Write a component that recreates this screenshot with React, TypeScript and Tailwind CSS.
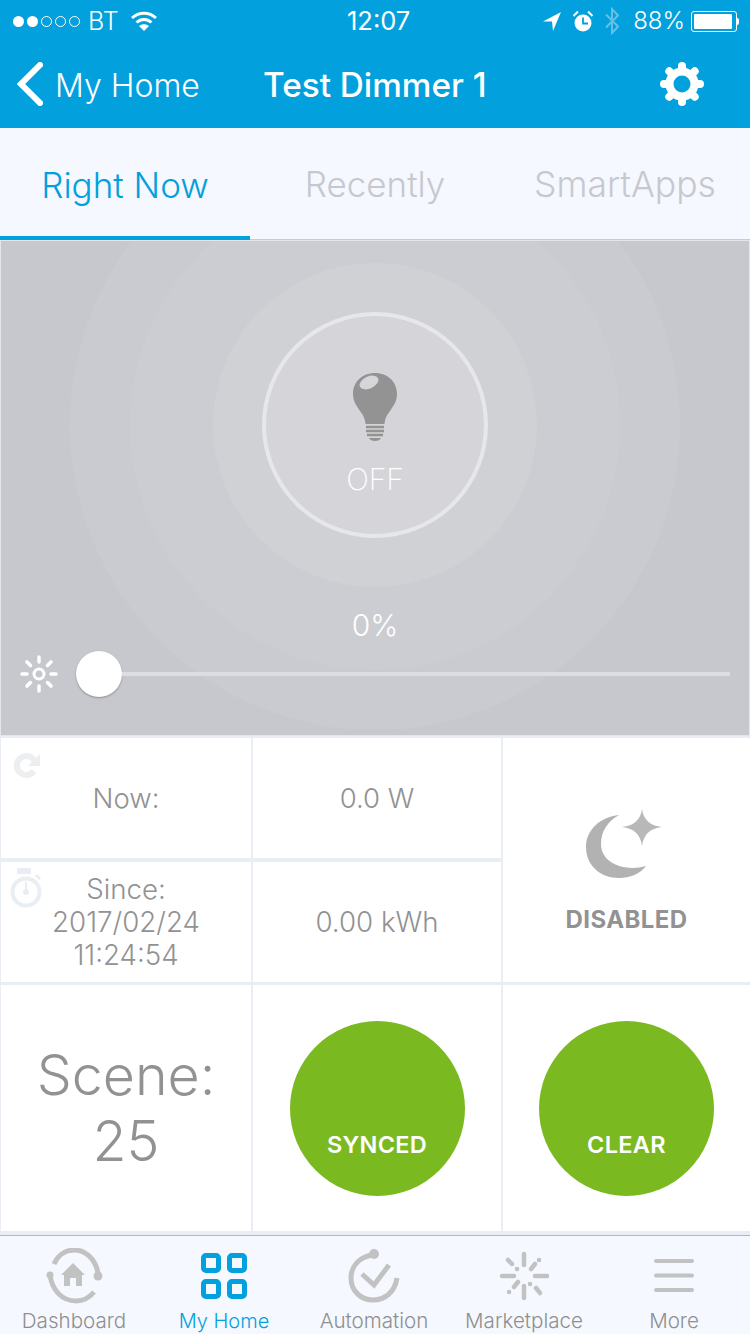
import type { ReactNode } from "react";

const FONT = "font-['Inter','Liberation_Sans',sans-serif]";

const GearIcon = () => (
  <svg width="44" height="44" viewBox="0 0 44 44" fill="none" stroke="#fff">
    <circle cx="22" cy="22" r="12.5" strokeWidth="8" />
    {[0, 45, 90, 135, 180, 225, 270, 315].map((a) => (
      <line key={a} x1="22" y1="4" x2="22" y2="9" strokeWidth="8" strokeLinecap="round" transform={`rotate(${a} 22 22)`} />
    ))}
  </svg>
);

const StatusBar = () => (
  <div className="flex h-10 items-center pl-[13px] pr-[11px] pt-[2px] text-white">
    <div className="flex w-[334px] items-center">
      <div className="flex items-center gap-[3px]">
        <span className="h-[11px] w-[11px] rounded-full bg-white" />
        <span className="h-[11px] w-[11px] rounded-full bg-white" />
        <span className="h-[11px] w-[11px] rounded-full border border-white" />
        <span className="h-[11px] w-[11px] rounded-full border border-white" />
        <span className="h-[11px] w-[11px] rounded-full border border-white" />
      </div>
      <span className="ml-[8px] text-[25px] font-light leading-none">BT</span>
      <svg className="ml-[11px]" width="28" height="20" viewBox="0 0 28 20" fill="none" stroke="#fff" strokeWidth="3">
        <path d="M2 7c7-6.500 17-6.500 24 0" />
        <path d="M6.500 11.500c4.500-4 10.500-4 15 0" />
        <path d="M14 20l-5-5c3-2.500 7-2.500 10 0z" fill="#fff" stroke="none" />
      </svg>
    </div>
    <span className="text-[25.500px] font-normal leading-none">12:07</span>
    <div className="ml-auto flex items-center">
      <svg width="20" height="21" viewBox="0 0 20 21">
        <path d="M19 1L1 10.500h9l1 9.500z" fill="#fff" />
      </svg>
      <svg className="ml-[10px]" width="22" height="23" viewBox="0 0 22 23" fill="none">
        <circle cx="11" cy="13" r="8.500" fill="#fff" />
        <path d="M11 7.500V13.500H16" stroke="#02a0dc" strokeWidth="1.800" />
        <path d="M1.500 6L6 1.500M20.500 6L16 1.500" stroke="#fff" strokeWidth="2" />
      </svg>
      <svg className="ml-[11px]" width="14" height="28" viewBox="0 0 14 28" fill="none" stroke="#65bfe6" strokeWidth="2">
        <path d="M1 7.500L13 19.500L7 26V2L13 8.500L1 20.500" />
      </svg>
      <span className="ml-[14px] text-[24px] font-light leading-none">88%</span>
      <div className="ml-[6px] flex items-center">
        <div className="h-[21px] w-[46px] rounded-[3px] border border-white p-[2px]">
          <div className="h-full w-[38px] rounded-[1px] bg-white" />
        </div>
        <div className="h-[7px] w-[2px] rounded-r bg-white" />
      </div>
    </div>
  </div>
);

const NavBar = () => (
  <div className="flex h-[88px] items-center text-white">
    <svg className="ml-[17px]" width="26" height="44" viewBox="0 0 26 44" fill="none" stroke="#fff" strokeWidth="6" strokeLinecap="square">
      <path d="M23 3L4 22L23 41" />
    </svg>
    <span className="ml-[12px] mt-[3px] w-[208px] text-[32px] font-light leading-none">My Home</span>
    <span className="mt-[3px] text-[33.300px] font-medium leading-none">Test Dimmer 1</span>
    <div className="ml-auto mr-[46px]">
      <GearIcon />
    </div>
  </div>
);

const Tabs = () => (
  <div className="flex h-[112px] border-b border-[#c9cbd0] bg-[#f5f8ff]">
    <div className="-mb-px flex w-[250px] items-center justify-center border-b-[4px] border-[#02a0dc] pt-[6px] text-[35px] font-light text-[#02a0dc]">Right Now</div>
    <div className="flex w-[250px] items-center justify-center pt-[2px] text-[35px] font-light text-[#c7c8cd]">Recently</div>
    <div className="flex w-[250px] items-center justify-center pt-[2px] text-[35.500px] font-light text-[#c7c8cd]">SmartApps</div>
  </div>
);

const BulbIcon = () => (
  <svg width="46" height="68" viewBox="0 0 46 68">
    <path d="M23 0C10 0 1 9 1 21c0 7 3 11 7 17 3 4 5 7 5.500 13h19c.5-6 2.500-9 5.500-13 4-6 7-10 7-17C45 9 36 0 23 0z" fill="#939393" />
    <ellipse cx="17" cy="9.500" rx="10" ry="6" transform="rotate(-25 17 9.500)" fill="#d6d6da" />
    <path d="M14 54h18M14 58h18M15 62h16" stroke="#939393" strokeWidth="2.500" />
    <path d="M17 65h12c-1 2-3 3-6 3s-5-1-6-3z" fill="#939393" />
  </svg>
);

const SunIcon = () => (
  <svg width="40" height="40" viewBox="0 0 40 40" fill="none" stroke="#fff" strokeWidth="3.500" strokeLinecap="round">
    <circle cx="20" cy="20" r="5" strokeWidth="3" />
    {[0, 45, 90, 135, 180, 225, 270, 315].map((a) => (
      <line key={a} x1="20" y1="3" x2="20" y2="8" transform={`rotate(${a} 20 20)`} />
    ))}
  </svg>
);

const DimmerPanel = () => (
  <div className="relative h-[496px] overflow-hidden border border-[#e3e5ea] bg-[#c7c8cd]">
    <div className="absolute left-[69px] top-[-121px] h-[610px] w-[610px] rounded-full bg-[#cacbd0]" />
    <div className="absolute left-[129px] top-[-61px] h-[490px] w-[490px] rounded-full bg-[#cccdd2]" />
    <div className="absolute left-[212px] top-[22px] h-[324px] w-[324px] rounded-full bg-[#d0d1d5]" />
    <div className="relative flex flex-col items-center pt-[71px]">
      <div className="flex h-[226px] w-[226px] flex-col items-center rounded-full border-[4px] border-[#e6e7ea] bg-[#d5d5d9] pt-[57px]">
        <BulbIcon />
        <span className="mt-[23px] text-[30px] font-extralight leading-none text-white">OFF</span>
      </div>
      <span className="mt-[72px] text-[30px] font-light leading-none text-white">0%</span>
      <div className="mt-[11px] flex w-full items-center pl-[18px] pr-[19px]">
        <SunIcon />
        <div className="ml-[17px] h-[46px] w-[46px] shrink-0 rounded-full bg-white shadow-[0_1px_2px_rgba(0,0,0,0.3)]" />
        <div className="h-[4px] flex-1 bg-[#dcdde0]" />
      </div>
    </div>
  </div>
);

const Cell = ({ className, children }: { className: string; children: ReactNode }) => (
  <div className={`relative flex items-center justify-center bg-white text-[#929292] ${className}`}>{children}</div>
);

const SyncIcon = () => (
  <svg className="absolute left-[12px] top-[14px]" width="28" height="28" viewBox="0 0 28 28" fill="none">
    <path d="M21 19a9.500 9.500 0 1 1 0-11" stroke="#eceeef" strokeWidth="6" />
    <path d="M27 2v12H15z" fill="#eceeef" />
  </svg>
);

const TimerIcon = () => (
  <svg className="absolute left-[8px] top-[6px]" width="34" height="42" viewBox="0 0 34 42">
    <rect x="8" y="0" width="14" height="6" fill="#e9edf4" />
    <circle cx="17" cy="24" r="13.500" fill="none" stroke="#e9edf4" strokeWidth="4" />
    <circle cx="17" cy="24" r="3" fill="#e9edf4" />
    <path d="M16 14h2v10h-2z" fill="#e9edf4" />
    <path d="M28 6l4 4-2 2-4-4z" fill="#e9edf4" />
  </svg>
);

const MoonIcon = () => (
  <svg width="76" height="70" viewBox="0 0 76 70">
    <path d="M33 6C14 8 0 21 0 38c0 18 14 31 33 31 11 0 21-4 27-12-20 6-45-2-45-22C15 22 22 12 33 6z" fill="#b2b2b2" />
    <path d="M56 0Q58 16 76 18 58 20 56 37 54 20 36 18 54 16 56 0z" fill="#b8b8b8" />
  </svg>
);

const GreenButton = ({ label }: { label: string }) => (
  <div className="flex h-[175px] w-[175px] items-end justify-center rounded-full bg-[#7ab91f] pb-[39px] text-[23.500px] font-semibold leading-none tracking-[0.3px] text-white">
    {label}
  </div>
);

const InfoGrid = () => (
  <div className="grid h-[499px] grid-cols-[250px_248px_247px] grid-rows-[120px_120px_246px] gap-x-[2px] bg-[#e9edf4] pt-[2px] pb-[3px] pl-[1px] [row-gap:3.500px]">
    <Cell className="pt-[2px] text-[27.500px] font-light">
      <SyncIcon />
      <span>Now:</span>
    </Cell>
    <Cell className="pt-[2px] text-[27.500px] font-light">0.0 W</Cell>
    <Cell className="row-span-2 flex-col pt-[22px]">
      <div className="mr-[5px]"><MoonIcon /></div>
      <span className="mt-[29px] text-[24px] font-bold leading-none tracking-[0.4px]">DISABLED</span>
    </Cell>
    <Cell className="flex-col pt-[2px] text-center text-[27.700px] font-light leading-[33px]">
      <TimerIcon />
      <span>Since:</span>
      <span>2017/02/24</span>
      <span>11:24:54</span>
    </Cell>
    <Cell className="pt-[3px] text-[27.700px] font-light">0.00 kWh</Cell>
    <Cell className="flex-col text-[55.500px] font-light leading-[66px] text-[#8e8e8e]">
      <span>Scene:</span>
      <span>25</span>
    </Cell>
    <Cell className=""><GreenButton label="SYNCED" /></Cell>
    <Cell className=""><GreenButton label="CLEAR" /></Cell>
  </div>
);

const DashboardIcon = () => (
  <svg width="60" height="56" viewBox="0 0 60 56" fill="none" stroke="#c2c2c2" strokeWidth="5">
    <path d="M10 16C15 5 24 2 30 2c11 0 21 8 24 23" />
    <path d="M6 27c2 15 12 26 26 26 7 0 13-3 18-9" />
    <circle cx="6" cy="27" r="3.500" fill="#c2c2c2" stroke="none" />
    <circle cx="54" cy="28" r="4.500" fill="#c2c2c2" stroke="none" />
    <path d="M29 15L41 27h-3v11h-6v-8h-6v8h-6V27h-3z" fill="#c2c2c2" stroke="none" />
  </svg>
);

const GridIcon = () => (
  <svg width="46" height="46" viewBox="0 0 46 46" fill="none" stroke="#02a0dc" strokeWidth="5">
    <rect x="2.500" y="2.500" width="15" height="15" rx="2.500" />
    <rect x="28.500" y="2.500" width="15" height="15" rx="2.500" />
    <rect x="2.500" y="28.500" width="15" height="15" rx="2.500" />
    <rect x="28.500" y="28.500" width="15" height="15" rx="2.500" />
  </svg>
);

const AutomationIcon = () => (
  <svg width="52" height="54" viewBox="0 0 52 54" fill="none" stroke="#c2c2c2" strokeWidth="5">
    <path d="M23 6C11 9 3 17 3 29c0 13 10 22 22 22 13 0 22-9 24-22" />
    <circle cx="26" cy="5" r="5" fill="#c2c2c2" stroke="none" />
    <path d="M14 25l12 11 15-20" strokeWidth="5" />
  </svg>
);

const MarketplaceIcon = () => (
  <svg width="50" height="50" viewBox="0 0 50 50" fill="none" stroke="#c2c2c2" strokeWidth="4.500" strokeLinecap="round">
    <path d="M25 3v11M25 35v12M3 25h12M36 25h12" strokeWidth="4.500" />
    <path d="M9 9l4 4M32 18l4-5M15 36l4-5M37 37l4 5" />
    <path d="M40 9h.1M18 18h.1M10 41h.1M31 33h.1" />
  </svg>
);

const MoreIcon = () => (
  <svg width="40" height="34" viewBox="0 0 40 34" fill="#c2c2c2">
    <rect y="0" width="40" height="4" rx="2" />
    <rect y="14.500" width="40" height="4" rx="2" />
    <rect y="29" width="40" height="4" rx="2" />
  </svg>
);

const TabItem = ({ icon, label, active }: { icon: ReactNode; label: string; active?: boolean }) => (
  <div className="flex w-[150px] flex-col items-center pr-[2px]">
    <div className="flex h-[58px] items-center justify-center">{icon}</div>
    <span className={`mt-[6px] font-light leading-none ${active ? "text-[20px] text-[#02a0dc]" : "text-[20.600px] text-[#8f8f8f]"}`}>{label}</span>
  </div>
);

const BottomBar = () => (
  <div className="flex h-[99px] border-t border-[#b5b6ba] bg-[#f5f8ff] pt-[11px]">
    <TabItem icon={<DashboardIcon />} label="Dashboard" />
    <TabItem icon={<GridIcon />} label="My Home" active />
    <TabItem icon={<AutomationIcon />} label="Automation" />
    <TabItem icon={<MarketplaceIcon />} label="Marketplace" />
    <TabItem icon={<MoreIcon />} label="More" />
  </div>
);

export default function App() {
  return (
    <div className={`flex h-[1334px] w-[750px] flex-col overflow-hidden bg-[#e9edf4] ${FONT}`}>
      <div className="h-[128px] bg-[#02a0dc]">
        <StatusBar />
        <NavBar />
      </div>
      <Tabs />
      <DimmerPanel />
      <InfoGrid />
      <BottomBar />
    </div>
  );
}
